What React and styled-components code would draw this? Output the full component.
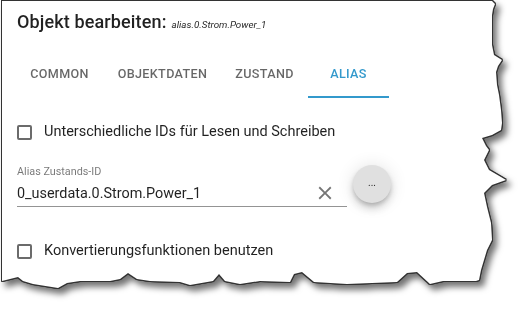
import React from 'react'
import styled, { createGlobalStyle } from 'styled-components'

const GlobalStyle = createGlobalStyle`
  html, body {
    margin: 0;
    padding: 0;
    background: #fff;
  }
  body {
    font-family: Roboto, "Noto Sans", sans-serif;
    color: rgba(0, 0, 0, 0.87);
  }
`

// torn paper outline, page coordinates
const tornEdge = [
  [2, 1], [492, 1], [495, 4], [493, 9], [492, 15], [492, 45], [494, 55], [502, 60],
  [498, 66], [496, 72], [497, 85], [499, 95], [501, 110], [502, 123], [501, 130],
  [492, 135], [482, 138], [486, 146], [489, 150], [484, 160], [489, 170], [501, 177],
  [506, 180], [492, 185], [484, 193], [487, 207], [491, 223], [492, 240], [487, 250],
  [484, 260], [481, 270], [479, 280],
  [476, 281], [443, 281], [430, 284], [417, 272], [407, 273], [397, 282], [347, 284],
  [314, 282], [302, 272], [294, 274], [290, 282], [260, 281], [240, 284], [225, 281],
  [219, 274], [213, 281], [190, 285], [180, 282], [150, 281], [137, 279], [128, 273],
  [120, 279], [110, 281], [80, 281], [67, 283], [58, 288], [33, 284], [23, 281],
  [18, 277], [10, 279], [2, 281],
]
const tornPolygon = `polygon(${tornEdge.map(([x, y]) => `${x}px ${y}px`).join(', ')})`

const Frame = styled.div`
  width: 528px;
  height: 317px;
  filter: drop-shadow(1px 0 0 #333) drop-shadow(-1px 0 0 #333)
    drop-shadow(0 1px 0 #333) drop-shadow(0 -1px 0 #333)
    drop-shadow(4px 5px 3px rgba(0, 0, 0, 0.55));
`

const Sheet = styled.div`
  width: 100%;
  height: 100%;
  background: #fff;
  clip-path: ${tornPolygon};
  display: flex;
  flex-direction: column;
`

const Header = styled.h2`
  margin: 6px 0 0;
  padding-left: 17px;
  font-size: 18px;
  font-weight: 500;
  line-height: 32px;
  letter-spacing: 0.0075em;
  white-space: nowrap;
`

const ObjectId = styled.span`
  font-size: 9.8px;
  font-style: italic;
  font-weight: 400;
  letter-spacing: 0;
  margin-left: 5px;
`

const TabBar = styled.div`
  display: flex;
  margin-top: 9px;
  padding-left: 15px;
  height: 48px;
`

const Tab = styled.div`
  width: ${p => p.$w}px;
  display: flex;
  align-items: center;
  justify-content: center;
  font-size: 12.6px;
  font-weight: 500;
  letter-spacing: 0.02857em;
  text-transform: uppercase;
  color: ${p => (p.$active ? '#3399cc' : 'rgba(0, 0, 0, 0.6)')};
  border-bottom: 2px solid ${p => (p.$active ? '#3399cc' : 'transparent')};
  box-sizing: border-box;
  padding-top: 1px;
`

const Body = styled.div`
  display: flex;
  flex-direction: column;
  padding-left: 17px;
`

const CheckRow = styled.label`
  display: flex;
  align-items: center;
  gap: 12px;
  height: 38px;
  margin-top: ${p => p.$top}px;
  font-size: 14.5px;
  line-height: 1.5;
`

const Box = styled.span`
  width: 15px;
  height: 15px;
  box-sizing: border-box;
  border: 2px solid rgba(0, 0, 0, 0.58);
  border-radius: 2px;
  flex: none;
`

const FieldRow = styled.div`
  display: flex;
  align-items: center;
  gap: 6px;
  margin-top: 14px;
`

const Field = styled.div`
  width: 330px;
  display: flex;
  flex-direction: column;
`

const FieldLabel = styled.div`
  font-size: 10.8px;
  line-height: 14px;
  color: rgba(0, 0, 0, 0.54);
`

const InputLine = styled.div`
  display: flex;
  align-items: center;
  height: 28px;
  padding-top: 1px;
  box-sizing: border-box;
  border-bottom: 1px solid rgba(0, 0, 0, 0.42);
`

const InputText = styled.span`
  flex: 1;
  font-size: 14.4px;
  line-height: 19px;
`

const ClearButton = styled.span`
  display: flex;
  width: 22px;
  height: 22px;
  margin-right: 11px;
  color: rgba(0, 0, 0, 0.54);
`

const Fab = styled.button`
  width: 38px;
  height: 38px;
  border-radius: 50%;
  border: none;
  background: #e0e0e0;
  color: rgba(0, 0, 0, 0.87);
  font-family: Roboto, sans-serif;
  font-size: 10px;
  line-height: 1;
  padding: 0 0 3px;
  margin-top: -4px;
  box-shadow: 0 3px 5px -1px rgba(0, 0, 0, 0.2), 0 6px 10px 0 rgba(0, 0, 0, 0.14),
    0 1px 18px 0 rgba(0, 0, 0, 0.12);
`

const tabs = [
  { label: 'Common', w: 89 },
  { label: 'Objektdaten', w: 117 },
  { label: 'Zustand', w: 87 },
  { label: 'Alias', w: 81, active: true },
]

export default function App() {
  return (
    <>
      <GlobalStyle />
      <Frame>
        <Sheet>
          <Header>
            Objekt bearbeiten:<ObjectId>alias.0.Strom.Power_1</ObjectId>
          </Header>
          <TabBar>
            {tabs.map(t => (
              <Tab key={t.label} $w={t.w} $active={t.active}>
                {t.label}
              </Tab>
            ))}
          </TabBar>
          <Body>
            <CheckRow $top={15}>
              <Box />
              Unterschiedliche IDs für Lesen und Schreiben
            </CheckRow>
            <FieldRow>
              <Field>
                <FieldLabel>Alias Zustands-ID</FieldLabel>
                <InputLine>
                  <InputText>0_userdata.0.Strom.Power_1</InputText>
                  <ClearButton>
                    <svg viewBox="0 0 24 24" width="22" height="22" fill="currentColor">
                      <path d="M19 6.41 17.59 5 12 10.59 6.41 5 5 6.41 10.59 12 5 17.59 6.41 19 12 13.41 17.59 19 19 17.59 13.41 12z" />
                    </svg>
                  </ClearButton>
                </InputLine>
              </Field>
              <Fab>...</Fab>
            </FieldRow>
            <CheckRow $top={25}>
              <Box />
              Konvertierungsfunktionen benutzen
            </CheckRow>
          </Body>
        </Sheet>
      </Frame>
    </>
  )
}
